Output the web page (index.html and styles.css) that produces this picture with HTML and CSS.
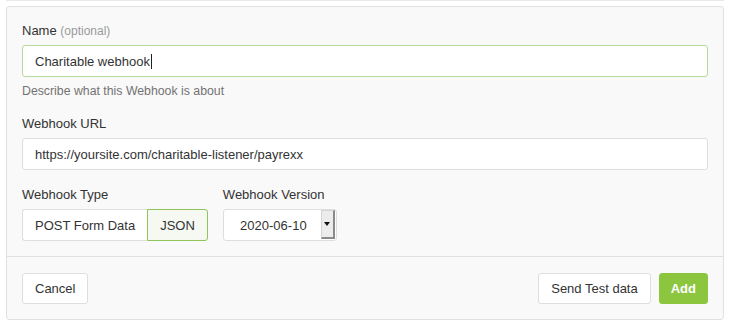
FILE: index.html
```html
<!DOCTYPE html>
<html>
<head>
<meta charset="utf-8">
<link rel="stylesheet" href="styles.css">
</head>
<body>
<div class="topline"></div>
<div class="panel">
  <div class="panel-body">
    <div class="field">
      <div class="label">Name <span class="optional">(optional)</span></div>
      <div class="control focused"><span>Charitable webhook</span><span class="caret"></span></div>
      <div class="help">Describe what this Webhook is about</div>
    </div>
    <div class="field gap-big">
      <div class="label">Webhook URL</div>
      <div class="control">https://yoursite.com/charitable-listener/payrexx</div>
    </div>
    <div class="row">
      <div class="field">
        <div class="label">Webhook Type</div>
        <div class="btn-group">
          <div class="seg">POST Form Data</div>
          <div class="seg active">JSON</div>
        </div>
      </div>
      <div class="field">
        <div class="label">Webhook Version</div>
        <div class="select">
          <div class="select-value">2020-06-10</div>
          <div class="select-arrow"><span class="tri"></span></div>
        </div>
      </div>
    </div>
  </div>
  <div class="panel-footer">
    <div class="btn">Cancel</div>
    <div class="right">
      <div class="btn">Send Test data</div>
      <div class="btn primary">Add</div>
    </div>
  </div>
</div>
</body>
</html>
```

FILE: styles.css
```css
html, body {
  margin: 0;
  padding: 0;
  background: #fff;
}
body {
  font-family: "Liberation Sans", Arial, sans-serif;
  font-size: 13px;
  color: #333;
  padding: 0 5px 0 6px;
}
.topline {
  height: 1px;
  background: #e9e9e9;
}
.panel {
  margin-top: 5px;
  border: 1px solid #e1e1e1;
  border-radius: 3px;
  background: #f9f9f9;
}
.panel-body {
  padding: 15px 15px 15px;
}
.label {
  line-height: 18px;
  margin-bottom: 5px;
  color: #333;
}
.optional {
  color: #999;
  font-size: 12px;
}
.control {
  height: 32px;
  box-sizing: border-box;
  border: 1px solid #dedede;
  border-radius: 3px;
  background: #fff;
  padding: 0 12px;
  display: flex;
  align-items: center;
  color: #333;
}
.control.focused {
  border-color: #b4d99a;
}
.caret {
  display: inline-block;
  width: 1px;
  height: 15px;
  background: #222;
  margin-left: 1px;
}
.help {
  color: #737373;
  font-size: 12.3px;
  line-height: 18px;
  margin-top: 5px;
}
.gap-big {
  margin-top: 15px;
}
.row {
  display: flex;
  gap: 15px;
  margin-top: 16px;
}
.btn-group {
  display: flex;
  height: 32px;
}
.seg {
  box-sizing: border-box;
  height: 32px;
  display: flex;
  align-items: center;
  padding: 0 12px;
  border: 1px solid #dedede;
  background: #fff;
  color: #333;
}
.seg:first-child {
  border-radius: 3px 0 0 3px;
  border-right: none;
}
.seg.active {
  background: #f6f8f2;
  border-color: #8fc45a;
  border-radius: 0 3px 3px 0;
}
.select {
  display: flex;
  width: 114px;
  height: 32px;
  box-sizing: border-box;
  border: 1px solid #dedede;
  border-radius: 3px;
  background: #fff;
}
.select-value {
  flex: 1;
  display: flex;
  align-items: center;
  justify-content: center;
  padding-left: 2px;
}
.select-arrow {
  width: 11px;
  margin: 0 1px 1px 0;
  background: #ececec;
  border: 1px solid #d4d4d4;
  border-right: 2px solid #8a8a8a;
  border-bottom: 2px solid #8a8a8a;
  display: flex;
  align-items: center;
  justify-content: center;
}
.tri {
  width: 0;
  height: 0;
  border-left: 3px solid transparent;
  border-right: 3px solid transparent;
  border-top: 4px solid #111;
}
.panel-footer {
  border-top: 1px solid #e1e1e1;
  padding: 16px 15px 15px;
  display: flex;
  justify-content: space-between;
}
.right {
  display: flex;
  gap: 8px;
}
.btn {
  box-sizing: border-box;
  height: 31px;
  display: flex;
  align-items: center;
  padding: 0 12px;
  border: 1px solid #dedede;
  border-radius: 3px;
  background: #fff;
  color: #333;
}
.btn.primary {
  background: #8cc63f;
  border-color: #8cc63f;
  color: #fff;
  font-weight: bold;
  padding: 0 11px;
}
```
